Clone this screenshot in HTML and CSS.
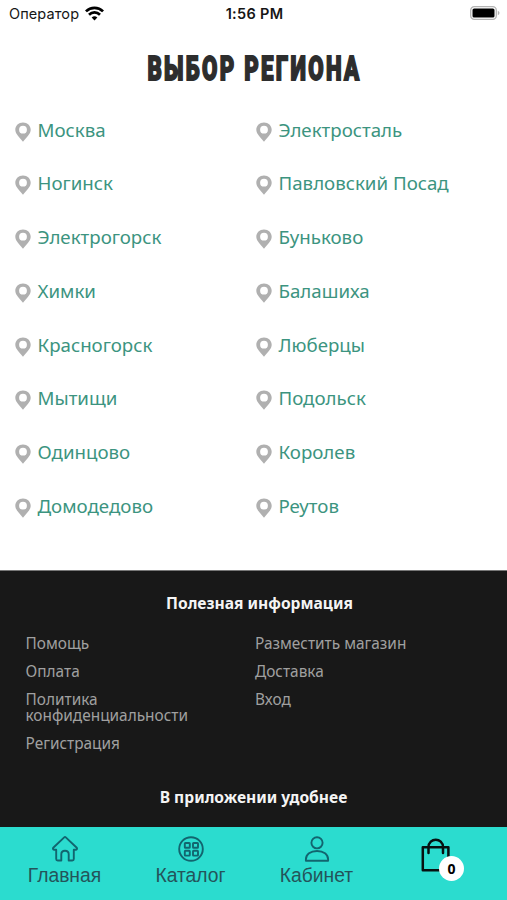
FILE: index.html
```html
<!DOCTYPE html>
<html lang="ru">
<head>
<meta charset="utf-8">
<title>Выбор региона</title>
<link rel="stylesheet" href="styles.css">
</head>
<body>
<svg class="defs" width="0" height="0" aria-hidden="true">
  <symbol id="pin" viewBox="0 0 16 20"><path fill-rule="evenodd" d="M8 .4C3.6.4.3 3.6.3 7.700c0 4.400 4.500 7.800 7.700 12 3.200-4.200 7.700-7.600 7.700-12C15.700 3.600 12.400.4 8 .4Zm0 3.400a3.900 3.900 0 1 1 0 7.800 3.900 3.900 0 0 1 0-7.800Z"/></symbol>
</svg>
<div class="screen">
  <header class="status">
    <div class="carrier"><span>Оператор</span>
      <svg class="wifi" viewBox="0 0 18 14"><path d="M9 13.600 6.300 10.900a3.900 3.900 0 0 1 5.400 0Z"/><path class="arc" d="M3.800 8.100a7.500 7.500 0 0 1 10.400 0M.9 5a11.600 11.600 0 0 1 16.200 0"/></svg>
    </div>
    <div class="time">1:56 PM</div>
    <svg class="battery" viewBox="0 0 30 14"><rect class="case" x=".7" y=".7" width="25.600" height="12.600" rx="3.600"/><rect x="2.500" y="2.500" width="22" height="9" rx="1.600"/><path class="cap" d="M27.800 4.800c2.200.9 2.200 3.500 0 4.400Z"/></svg>
  </header>
  <main>
    <h1><span>ВЫБОР РЕГИОНА</span></h1>
    <div class="cities">
      <a><svg><use href="#pin"/></svg><span>Москва</span></a>
      <a><svg><use href="#pin"/></svg><span>Электросталь</span></a>
      <a><svg><use href="#pin"/></svg><span>Ногинск</span></a>
      <a><svg><use href="#pin"/></svg><span>Павловский Посад</span></a>
      <a><svg><use href="#pin"/></svg><span>Электрогорск</span></a>
      <a><svg><use href="#pin"/></svg><span>Буньково</span></a>
      <a><svg><use href="#pin"/></svg><span>Химки</span></a>
      <a><svg><use href="#pin"/></svg><span>Балашиха</span></a>
      <a><svg><use href="#pin"/></svg><span>Красногорск</span></a>
      <a><svg><use href="#pin"/></svg><span>Люберцы</span></a>
      <a><svg><use href="#pin"/></svg><span>Мытищи</span></a>
      <a><svg><use href="#pin"/></svg><span>Подольск</span></a>
      <a><svg><use href="#pin"/></svg><span>Одинцово</span></a>
      <a><svg><use href="#pin"/></svg><span>Королев</span></a>
      <a><svg><use href="#pin"/></svg><span>Домодедово</span></a>
      <a><svg><use href="#pin"/></svg><span>Реутов</span></a>
    </div>
  </main>
  <footer>
    <h2 class="info-title">Полезная информация</h2>
    <div class="links">
      <ul><li>Помощь</li><li>Оплата</li><li>Политика<br>конфиденциальности</li><li>Регистрация</li></ul>
      <ul><li>Разместить магазин</li><li>Доставка</li><li>Вход</li></ul>
    </div>
    <h2>В приложении удобнее</h2>
  </footer>
  <nav>
    <a><svg viewBox="0 0 26 26"><path d="M12.200 1.400 1.500 11.500c-1 1-.4 2.300.9 2.300h1.800V23c0 1 .5 1.500 1.500 1.500h3.600v-6.200c0-4.800 7.400-4.800 7.400 0v6.200h3.600c1 0 1.500-.5 1.500-1.500v-9.200h1.800c1.300 0 1.900-1.300.9-2.300L13.800 1.400a1.200 1.200 0 0 0-1.600 0Z"/></svg><span>Главная</span></a>
    <a><svg viewBox="0 0 26 26"><circle cx="13" cy="13" r="11.800"/><rect x="6.800" y="7" width="5" height="4.800" rx=".6"/><rect x="15" y="7" width="5" height="4.800" rx=".6"/><rect x="6.800" y="14.800" width="5" height="4.800" rx=".6"/><rect x="15" y="14.800" width="5" height="4.800" rx=".6"/></svg><span>Каталог</span></a>
    <a><svg viewBox="0 0 26 26"><circle cx="13" cy="6.800" r="5.600"/><path d="M1.900 24.700v-1.400c0-4.800 4.500-8.300 11.100-8.300s11.100 3.500 11.100 8.300v1.400Z"/></svg><span>Кабинет</span></a>
    <a class="cart"><svg viewBox="0 0 30 34"><path d="M1.800 9.200h25.600v23H1.800ZM7.500 15V9.200c0-10 14.500-10 14.500 0V15"/></svg><b>0</b></a>
  </nav>
</div>
</body>
</html>
```
FILE: styles.css
```css
* { box-sizing: border-box; }
body { margin: 0; background: #fff; font-family: "Noto Sans", sans-serif; }
.defs { display: block; height: 0; }
.screen { width: 507px; height: 900px; display: flex; flex-direction: column; overflow: hidden; }

.status { height: 28px; padding: 0 7px 0 9px; display: grid; grid-template-columns: 1fr auto 1fr; align-items: center; font: 14.5px/28px Inter, sans-serif; color: #161616; }
.carrier { display: flex; align-items: center; gap: 6px; letter-spacing: .1px; }
.wifi { width: 19px; height: 15px; margin-top: -2px; }
.wifi .arc { fill: none; stroke: #000; stroke-width: 2.600; }
.time { font-weight: 600; font-size: 14.5px; letter-spacing: .3px; }
.battery { width: 30px; height: 14px; justify-self: end; margin-top: -2px; }
.battery .case { fill: #fff; stroke: #b4b4b4; stroke-width: 1.300; }
.battery .cap { fill: #b4b4b4; }

main { height: 541.5px; }
h1 { margin: 22px 0 0; padding-left: 2px; height: 36px; display: flex; justify-content: center; font: 900 34px/36px Roboto, sans-serif; color: #2d2d2d; }
h1 span { display: block; white-space: nowrap; letter-spacing: 3.500px; transform: scaleX(.655); -webkit-text-stroke: 1.800px #2d2d2d; }
.cities { margin-top: 16.5px; padding-left: 15px; display: grid; grid-template-columns: 241px 1fr; grid-auto-rows: 53.8px; }
.cities a { display: flex; align-items: flex-start; gap: 6.5px; font-size: 18.700px; line-height: 54px; color: #3c9480; white-space: nowrap; }
.cities svg { width: 16px; height: 20px; margin-top: 19px; fill: #b0b0b0; }

footer { height: 257.5px; background: #181818; color: #f4f4f4; border-top: 1px solid #777; }
h2 { margin: 0; font-size: 15.600px; line-height: 24px; font-weight: 700; text-align: center; }
.info-title { padding: 20px 0 0 12px; }
.links { margin-top: 21.5px; padding-left: 25.5px; display: grid; grid-template-columns: 229.5px 1fr; height: 148.5px; align-items: start; }
ul { list-style: none; margin: 0; padding: 0; display: flex; flex-direction: column; gap: 12px; font-size: 15.400px; line-height: 16px; color: #a0a0a0; }

nav { height: 73px; background: #2bdccf; display: grid; grid-template-columns: 129px 123px 129px 126px; }
nav a { display: flex; flex-direction: column; align-items: center; padding-top: 9px; font: 19.300px/24px "Liberation Sans", sans-serif; color: #24545a; }
nav svg { width: 26px; height: 26px; fill: none; stroke: #12656f; stroke-width: 1.900; stroke-linejoin: round; stroke-linecap: round; }
nav span { margin-top: 2px; }
nav .cart { position: relative; padding-top: 11px; }
.cart svg { width: 30px; height: 34px; margin-right: 16px; stroke: #071111; stroke-width: 2.500; }
.cart b { position: absolute; left: 58px; top: 29px; width: 25px; height: 25px; border-radius: 50%; background: #fff; color: #000; font: 700 14px/25px "Noto Sans", sans-serif; text-align: center; }
```
